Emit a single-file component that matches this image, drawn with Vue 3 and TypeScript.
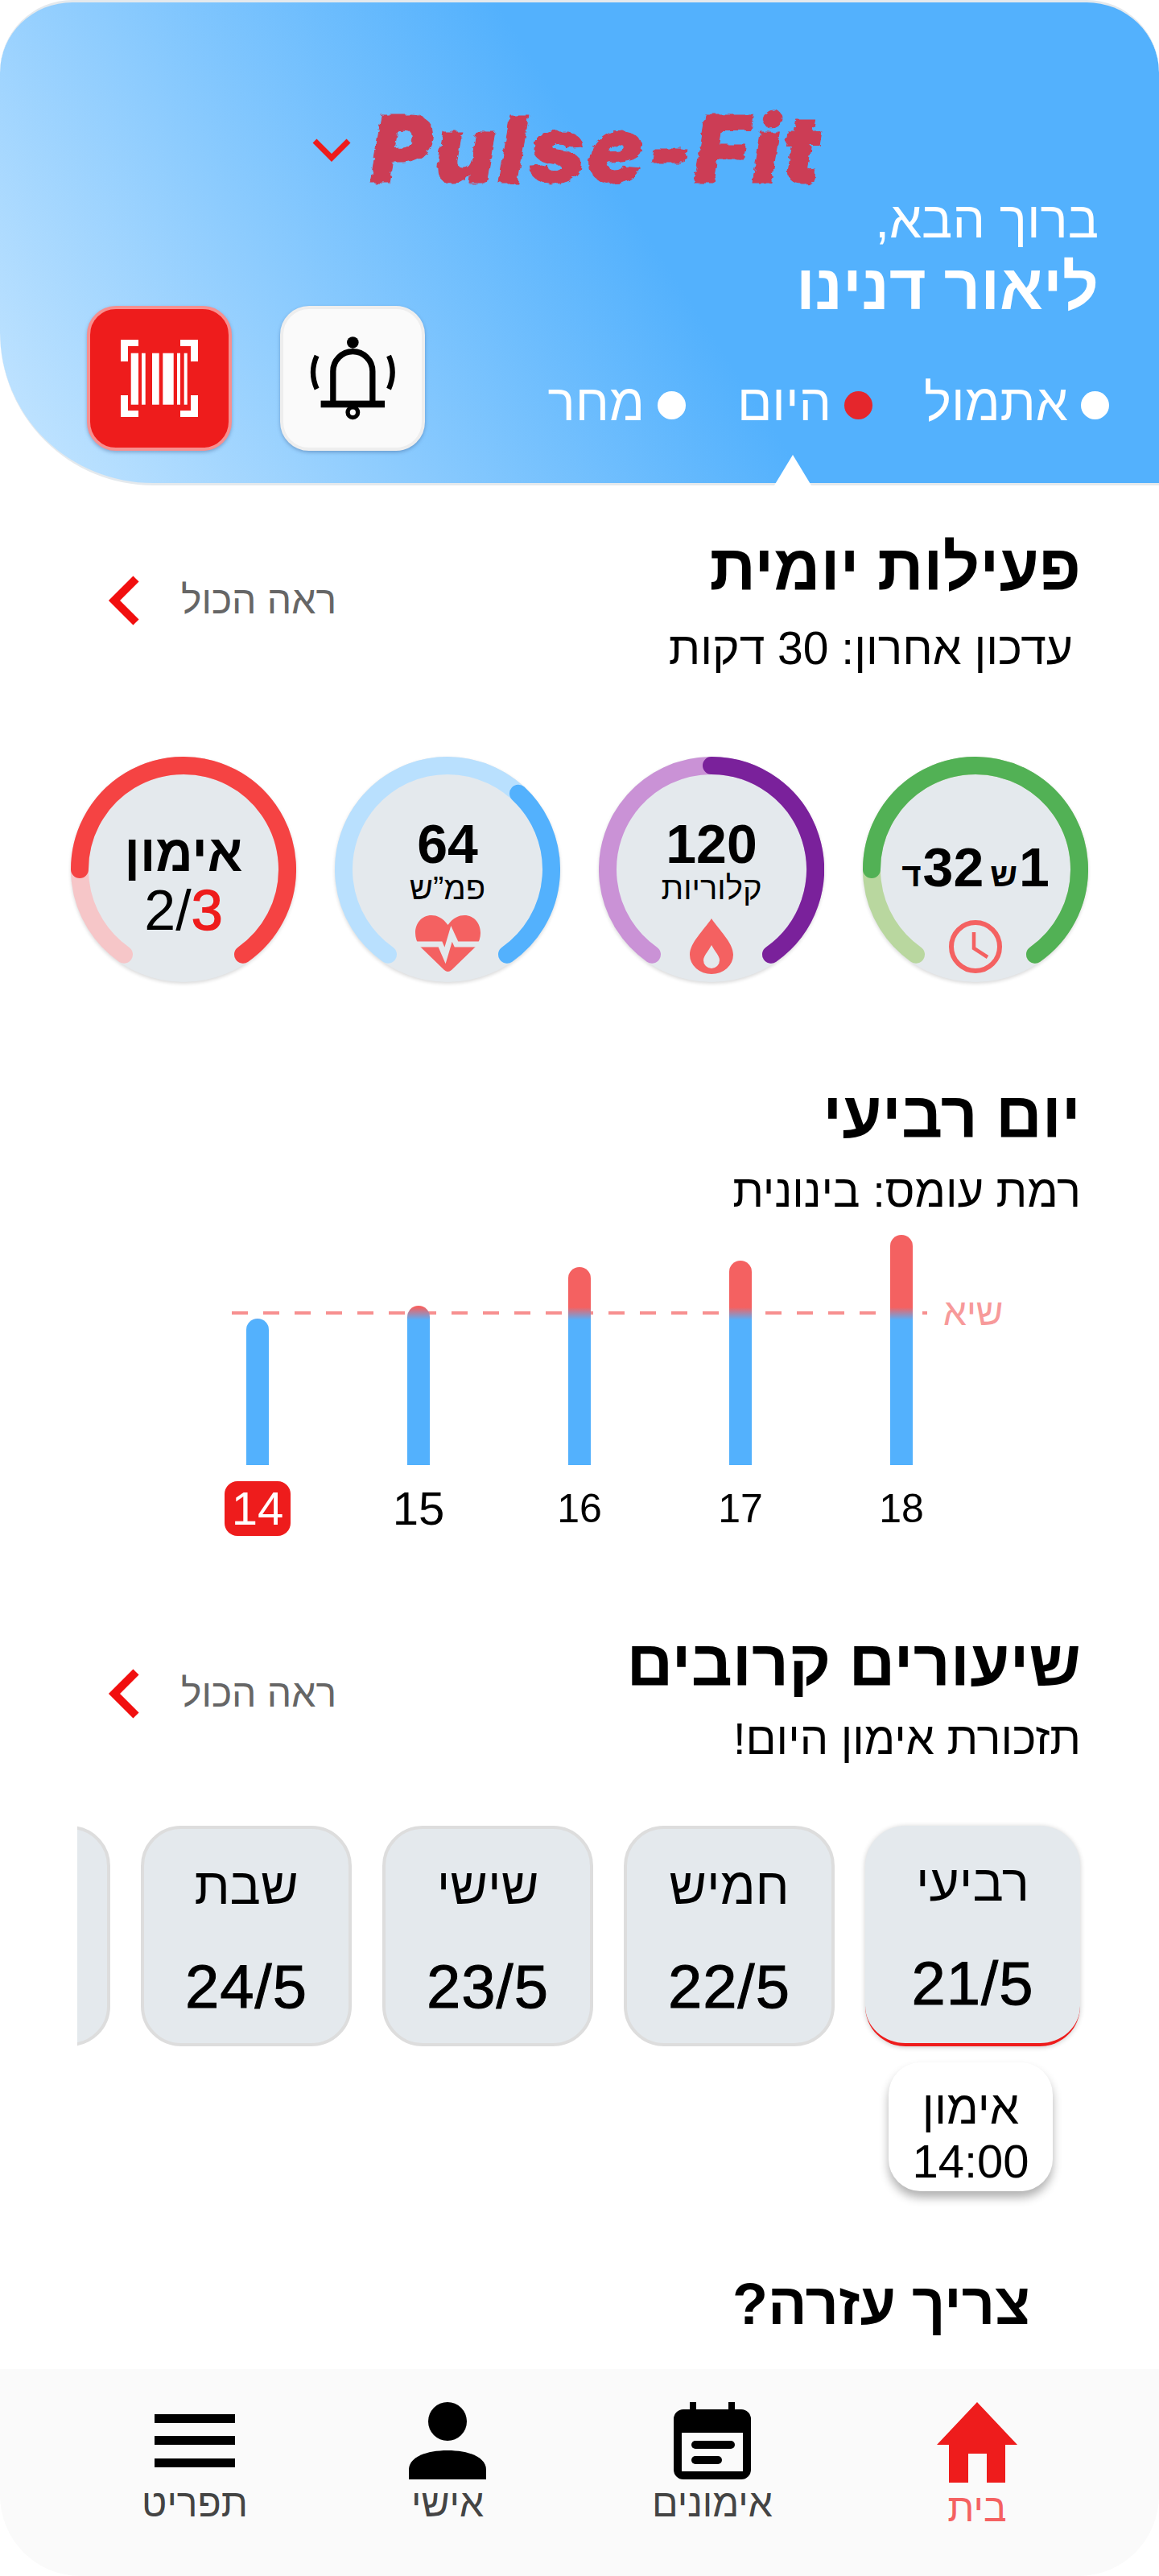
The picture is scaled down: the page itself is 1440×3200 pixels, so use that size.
<script setup lang="ts">
interface Ring {
  id: string;
  track: string;
  value: string;
  from: number;
}

// the gauges run clockwise from 215deg to 145deg, with a gap at the bottom
const ARC_START = 215;
const ARC_END = 505;

const rings: Ring[] = [
  { id: 'time', track: '#b9d79f', value: '#52b155', from: 270 },
  { id: 'calories', track: '#ca92d6', value: '#7a219b', from: 360 },
  { id: 'pulse', track: '#b9e0fe', value: '#53b1fd', from: 403 },
  { id: 'workout', track: '#f6c6c8', value: '#f54343', from: 270 }
];

const arcPath = (from: number, to: number): string => {
  const r = 129;
  const point = (deg: number) => {
    const rad = (deg * Math.PI) / 180;
    return `${(140 + r * Math.sin(rad)).toFixed(2)} ${(140 - r * Math.cos(rad)).toFixed(2)}`;
  };
  const large = to - from > 180 ? 1 : 0;
  return `M ${point(from)} A ${r} ${r} 0 ${large} 1 ${point(to)}`;
};

const bars = [
  { label: '14', height: 182, current: true },
  { label: '15', height: 198, current: false },
  { label: '16', height: 246, current: false },
  { label: '17', height: 254, current: false },
  { label: '18', height: 286, current: false }
];

// the last card only peeks in from the edge of the strip
const days = [
  { name: 'רביעי', date: '21/5', today: true },
  { name: 'חמיש', date: '22/5', today: false },
  { name: 'שישי', date: '23/5', today: false },
  { name: 'שבת', date: '24/5', today: false },
  { name: '', date: '', today: false }
];

const barcodeLines = [
  [12.7, 9.3],
  [26, 4.7],
  [39, 8.7],
  [52.3, 13.4],
  [70, 4],
  [78.7, 4]
];
</script>

<template>
  <div class="app" dir="rtl">
    <svg class="defs" width="0" height="0" aria-hidden="true">
      <filter id="rough" x="-5%" y="-5%" width="110%" height="110%">
        <feTurbulence type="fractalNoise" baseFrequency="0.09 0.14" numOctaves="2" seed="4" />
        <feDisplacementMap in="SourceGraphic" scale="7" />
      </filter>
    </svg>

    <main class="content">
      <header class="hero">
        <div class="logo-row" dir="ltr">
          <svg class="logo-chevron" viewBox="0 0 48 30" width="48" height="30">
            <path d="M3 4 L24 25 L45 4" fill="none" stroke="#ee1c1c" stroke-width="7" />
          </svg>
          <span class="logo">Pulse-Fit</span>
        </div>

        <div class="hero-main">
          <div class="hero-text">
            <div class="greeting">ברוך הבא,</div>
            <div class="user-name">ליאור דנינו</div>
            <div class="tabs">
              <div class="tab"><span class="dot"></span>אתמול</div>
              <div class="tab"><span class="dot dot-active"></span>היום</div>
              <div class="tab"><span class="dot"></span>מחר</div>
            </div>
          </div>
          <div class="hero-actions">
            <button class="action action-bell">
              <svg viewBox="-2 0 320 316" width="106" height="105">
                <g fill="none" stroke="#000">
                  <path d="M85 245 V130 A74 74 0 0 1 233 130 V245" stroke-width="22" />
                  <path d="M24 72 Q-4 134 24 196" stroke-width="19" />
                  <path d="M294 72 Q322 134 294 196" stroke-width="19" />
                  <circle cx="159" cy="284" r="19" stroke-width="16" />
                </g>
                <circle cx="159" cy="22" r="22" />
                <rect x="39" y="240" width="240" height="26" />
              </svg>
            </button>
            <button class="action action-scan">
              <svg viewBox="0 0 96 96" width="96" height="96" fill="#fff">
                <path d="M0 0H22V8H9V27H0Z" />
                <path d="M96 0H74V8H87V27H96Z" />
                <path d="M0 96H22V88H9V69H0Z" />
                <path d="M96 96H74V88H87V69H96Z" />
                <rect v-for="line in barcodeLines" :key="line[0]" :x="line[0]" y="16.7" :width="line[1]" height="64" />
              </svg>
            </button>
          </div>
        </div>
        <span class="notch"></span>
      </header>

      <section class="section-head activity-head">
        <div>
          <h2 class="title">פעילות יומית</h2>
          <p class="subtitle subtitle-inset">עדכון אחרון: 30 דקות</p>
        </div>
        <a class="see-all">
          ראה הכול
          <svg viewBox="0 0 42 64" width="42" height="64">
            <path d="M36 5 L9 32 L36 59" fill="none" stroke="#f10f0f" stroke-width="10" />
          </svg>
        </a>
      </section>

      <section class="rings">
        <div v-for="ring in rings" :key="ring.id" class="ring">
          <svg class="ring-arcs" viewBox="0 0 280 280" width="280" height="280">
            <path :d="arcPath(ARC_START, ARC_END)" fill="none" :stroke="ring.track" stroke-width="22" stroke-linecap="round" />
            <path :d="arcPath(ring.from, ARC_END)" fill="none" :stroke="ring.value" stroke-width="22" stroke-linecap="round" />
          </svg>

          <div v-if="ring.id === 'time'" class="ring-body ring-time">
            <div class="time-value"><b>1</b><small>ש</small><b>32</b><small>ד</small></div>
            <svg class="ring-icon" viewBox="0 0 66 66" width="66" height="66">
              <circle cx="33" cy="33" r="30" fill="none" stroke="#f46161" stroke-width="6" />
              <path d="M31 15 V35 L48 46" fill="none" stroke="#f46161" stroke-width="4.5" />
            </svg>
          </div>

          <div v-else-if="ring.id === 'calories'" class="ring-body">
            <div class="ring-number">120</div>
            <div class="ring-label">קלוריות</div>
            <svg class="ring-icon" viewBox="0 0 54 69" width="54" height="69">
              <path
                fill="#f46161"
                fill-rule="evenodd"
                d="M27 0 C36 14 54 30 54 45 A27 24 0 0 1 0 45 C0 30 18 14 27 0 Z M27 33 C23 41 17 46 17 52 A10 10 0 0 0 37 52 C37 46 31 41 27 33 Z"
              />
            </svg>
          </div>

          <div v-else-if="ring.id === 'pulse'" class="ring-body">
            <div class="ring-number">64</div>
            <div class="ring-label">פמ”ש</div>
            <svg class="ring-icon ring-heart" viewBox="0 0 81 71" width="81" height="71">
              <path
                fill="#f46161"
                d="M40.5 12 C34 3 27 0 20 0 C8 0 0 10 0 22 C0 28 2 33 5 38 L36 68 Q40.5 72 45 68 L76 38 C79 33 81 28 81 22 C81 10 73 0 61 0 C54 0 47 3 40.5 12 Z"
              />
              <path d="M0 36 H31 L37 50 L45 23 L51 36 H81" fill="none" stroke="#e4e9ed" stroke-width="7" />
            </svg>
          </div>

          <div v-else class="ring-body ring-workout">
            <div class="workout-name">אימון</div>
            <div class="workout-count" dir="ltr">2/<b>3</b></div>
          </div>
        </div>
      </section>

      <section class="load-head">
        <h2 class="title">יום רביעי</h2>
        <p class="subtitle">רמת עומס: בינונית</p>
      </section>

      <section class="chart" dir="ltr">
        <div class="peak-line"></div>
        <span class="peak-label">שיא</span>
        <div v-for="bar in bars" :key="bar.label" class="chart-col">
          <div class="bar-slot">
            <div class="bar" :style="{ height: bar.height + 'px' }"></div>
          </div>
          <div class="bar-label" :class="{ 'bar-label-current': bar.current, 'bar-label-big': bar.label === '15' }">
            {{ bar.label }}
          </div>
        </div>
      </section>

      <section class="section-head lessons-head">
        <div>
          <h2 class="title">שיעורים קרובים</h2>
          <p class="subtitle">תזכורת אימון היום!</p>
        </div>
        <a class="see-all">
          ראה הכול
          <svg viewBox="0 0 42 64" width="42" height="64">
            <path d="M36 5 L9 32 L36 59" fill="none" stroke="#f10f0f" stroke-width="10" />
          </svg>
        </a>
      </section>

      <section class="days">
        <div v-for="(day, i) in days" :key="i" class="day" :class="{ 'day-today': day.today }">
          <div class="day-name">{{ day.name }}</div>
          <div class="day-date">{{ day.date }}</div>
        </div>
      </section>

      <div class="reminder-row">
        <div class="reminder">
          <div>אימון</div>
          <div>14:00</div>
        </div>
      </div>

      <h2 class="help-title">צריך עזרה?</h2>
    </main>

    <nav class="nav">
      <a class="nav-item nav-active">
        <svg viewBox="0 0 100 100" width="100" height="100">
          <path fill="#ee1c1c" d="M50 0 L100 53 H85 V100 H62 V64 H39 V100 H15 V53 H0 Z" />
        </svg>
        <span>בית</span>
      </a>
      <a class="nav-item">
        <svg viewBox="0 0 96 96" width="96" height="96">
          <path d="M20 0 H28 V9 H68 V0 H76 V9 H84 A12 12 0 0 1 96 21 V84 A12 12 0 0 1 84 96 H12 A12 12 0 0 1 0 84 V21 A12 12 0 0 1 12 9 H20 Z" />
          <rect x="10" y="38" width="76" height="48" fill="#fafafa" />
          <rect x="22" y="48" width="54" height="10" rx="5" />
          <rect x="22" y="67" width="38" height="10" rx="5" />
        </svg>
        <span>אימונים</span>
      </a>
      <a class="nav-item">
        <svg viewBox="0 0 96 96" width="96" height="96">
          <circle cx="48" cy="24" r="24" />
          <path d="M0 96 V84 C0 68 22 60 48 60 C74 60 96 68 96 84 V96 Z" />
        </svg>
        <span>אישי</span>
      </a>
      <a class="nav-item nav-last">
        <svg viewBox="0 0 100 96" width="100" height="96">
          <rect y="15" width="100" height="11" />
          <rect y="42" width="100" height="11" />
          <rect y="70" width="100" height="11" />
        </svg>
        <span>תפריט</span>
      </a>
    </nav>
  </div>
</template>

<style>
html,
body {
  background: #fff;
}
</style>

<style scoped>
.app {
  width: 1440px;
  height: 3200px;
  display: flex;
  flex-direction: column;
  overflow: hidden;
  font-family: "Liberation Sans", Arial, sans-serif;
  color: #000;
}

.defs {
  position: absolute;
}

.content {
  flex: 1;
  min-height: 0;
  overflow: hidden;
}

/* header */
.hero {
  position: relative;
  box-sizing: border-box;
  height: 603px;
  padding: 130px 62px 40px 108px;
  background: linear-gradient(57deg, #c6e6ff 0%, #53b1fd 55%);
  border: solid #e4e9ed;
  border-width: 3px 0 3px 0;
  border-radius: 90px 90px 0 190px;
}

.logo-row {
  display: flex;
  align-items: center;
  height: 104px;
  padding-left: 280px;
  gap: 24px;
}

.logo-chevron {
  flex: none;
  margin-top: 2px;
}

.logo {
  font-family: Inter, "Liberation Sans", sans-serif;
  font-size: 116px;
  font-weight: 900;
  font-style: italic;
  letter-spacing: 4px;
  line-height: 104px;
  color: #cc3d55;
  -webkit-text-stroke: 1px #cc3d55;
  filter: url(#rough);
}

.hero-main {
  display: flex;
  justify-content: space-between;
  align-items: flex-end;
}

.hero-text {
  color: #fff;
}

.greeting {
  margin-right: 13px;
  font-size: 64px;
  line-height: 72px;
}

.user-name {
  margin-top: 6px;
  margin-right: 13px;
  font-size: 79px;
  font-weight: 700;
  line-height: 84px;
}

.tabs {
  display: flex;
  gap: 64px;
  margin-top: 65px;
  margin-bottom: 24px;
}

.tab {
  display: flex;
  align-items: center;
  gap: 16px;
  font-size: 64px;
  line-height: 72px;
}

.dot {
  width: 35px;
  height: 35px;
  margin-top: 6px;
  border-radius: 50%;
  background: #fff;
}

.dot-active {
  background: #e5262c;
}

.hero-actions {
  display: flex;
  gap: 60px;
}

.action {
  display: flex;
  align-items: center;
  justify-content: center;
  box-sizing: border-box;
  width: 180px;
  height: 180px;
  padding: 0;
  border-radius: 36px;
  box-shadow: 0 2px 4px rgba(40, 70, 120, 0.35);
}

.action-scan {
  background: #ee1c1c;
  border: 4px solid #f78f8f;
}

.action-bell {
  background: #fafafa;
  border: 4px solid #eeeeee;
}

.notch {
  position: absolute;
  left: 962px;
  bottom: -3px;
  width: 46px;
  height: 38px;
  background: #fff;
  clip-path: polygon(50% 0, 100% 100%, 0 100%);
}

/* section headings */
.section-head {
  display: flex;
  justify-content: space-between;
  align-items: center;
  padding: 0 97px 0 133px;
}

.activity-head {
  margin-top: 57px;
}

.title {
  margin: 0;
  font-size: 80px;
  font-weight: 700;
  line-height: 90px;
}

.subtitle {
  margin: 25px 0 0;
  font-size: 56px;
  line-height: 60px;
}

.subtitle-inset {
  margin-right: 10px;
  font-size: 57px;
}

.see-all {
  display: flex;
  align-items: center;
  gap: 50px;
  margin-top: -4px;
  font-size: 48px;
  color: #666;
}

/* gauges */
.rings {
  display: flex;
  gap: 48px;
  margin-top: 105px;
  padding: 0 88px;
}

.ring {
  display: grid;
  flex: none;
  width: 280px;
  height: 280px;
  border-radius: 50%;
  background: #e4e9ed;
  box-shadow: 0 2px 4px rgba(0, 0, 0, 0.15);
}

.ring-arcs,
.ring-body {
  grid-area: 1 / 1;
}

.ring-body {
  display: flex;
  flex-direction: column;
  align-items: center;
  padding-top: 75px;
}

.ring-number {
  font-size: 68px;
  font-weight: 700;
  line-height: 66px;
}

.ring-label {
  font-size: 40px;
  line-height: 44px;
}

.ring-icon {
  margin-top: 16px;
}

.ring-heart {
  margin-top: 12px;
}

.ring-time {
  padding-top: 100px;
}

.time-value {
  display: flex;
  align-items: baseline;
  height: 74px;
  line-height: 74px;
  font-size: 68px;
  font-weight: 700;
}

.time-value small {
  margin: 0 2px 0 8px;
  font-size: 42px;
}

.time-value small:last-child {
  margin: 0 2px 0 0;
}

.ring-time .ring-icon {
  margin-top: 29px;
}

.ring-workout {
  padding-top: 85px;
}

.workout-name {
  font-size: 64px;
  font-weight: 700;
  line-height: 70px;
}

.workout-count {
  font-size: 70px;
  line-height: 72px;
}

.workout-count b {
  font-weight: 400;
  color: #ee1c1c;
  -webkit-text-stroke: 1.5px #ee1c1c;
}

/* weekly load chart */
.load-head {
  margin-top: 120px;
  padding: 0 97px;
}

.load-head .subtitle {
  margin-top: 20px;
}

.chart {
  position: relative;
  display: flex;
  width: 1000px;
  margin: 24px 220px 0 0;
}

.chart-col {
  flex: none;
  width: 200px;
}

.bar-slot {
  display: flex;
  align-items: flex-end;
  justify-content: center;
  height: 286px;
}

.bar {
  position: relative;
  width: 28px;
  border-radius: 14px 14px 0 0;
  background: linear-gradient(to top, #53b1fd 180px, #f46161 196px);
}

.bar-label {
  box-sizing: border-box;
  width: 82px;
  height: 68px;
  margin: 20px auto 0;
  border-radius: 16px;
  font-size: 50px;
  line-height: 68px;
  text-align: center;
}

.bar-label-big {
  font-size: 58px;
}

.bar-label-current {
  font-size: 58px;
  color: #fff;
  background: #ee1c1c;
}

.peak-line {
  position: absolute;
  top: 95px;
  left: 68px;
  width: 864px;
  height: 4px;
  background: repeating-linear-gradient(to right, #f78f8f 0 20px, transparent 20px 39px);
}

.peak-label {
  position: absolute;
  top: 68px;
  left: 952px;
  font-size: 46px;
  line-height: 56px;
  color: #f79a9a;
}

/* upcoming lessons */
.lessons-head {
  margin-top: 113px;
}

.lessons-head .subtitle {
  margin-top: 19px;
}

.days {
  display: flex;
  gap: 38px;
  margin: 72px 0 0 96px;
  padding: 6px 98px 8px 0;
  overflow: hidden;
}

.day {
  flex: none;
  box-sizing: border-box;
  width: 262px;
  height: 274px;
  border: 4px solid #dddddd;
  border-radius: 50px;
  background: #e4e9ed;
  text-align: center;
}

.day-today {
  width: 267px;
  border: 0;
  border-bottom: 4px solid #ee1c1c;
  box-shadow: 0 1px 6px rgba(0, 0, 0, 0.2);
}

.day-name {
  margin-top: 36px;
  font-size: 64px;
  line-height: 70px;
}

.day-date {
  margin-top: 50px;
  font-size: 76px;
  letter-spacing: 1px;
  line-height: 80px;
  -webkit-text-stroke: 1px #000;
}

.reminder-row {
  display: flex;
  margin-top: 12px;
  padding-right: 132px;
}

.reminder {
  box-sizing: border-box;
  width: 204px;
  height: 160px;
  padding-top: 22px;
  border-radius: 40px;
  background: #fff;
  box-shadow: 0 8px 12px rgba(0, 0, 0, 0.3);
  font-size: 58px;
  line-height: 67px;
  text-align: center;
}

.help-title {
  margin: 100px 160px 0 0;
  font-size: 72px;
  font-weight: 700;
  line-height: 80px;
}

/* bottom navigation */
.nav {
  flex: none;
  display: flex;
  gap: 129px;
  box-sizing: border-box;
  height: 257px;
  padding: 41px 126px 0 0;
  background: #fafafa;
  border-radius: 0 0 100px 100px;
}

.nav-item {
  flex: none;
  width: 200px;
  display: flex;
  flex-direction: column;
  align-items: center;
  font-size: 48px;
  line-height: 56px;
  color: #444;
}

.nav-item span {
  margin-top: 2px;
}

.nav-last {
  margin-right: -15px;
}

.nav-active {
  color: #f46161;
}

.nav-active span {
  margin-top: 4px;
}
</style>
